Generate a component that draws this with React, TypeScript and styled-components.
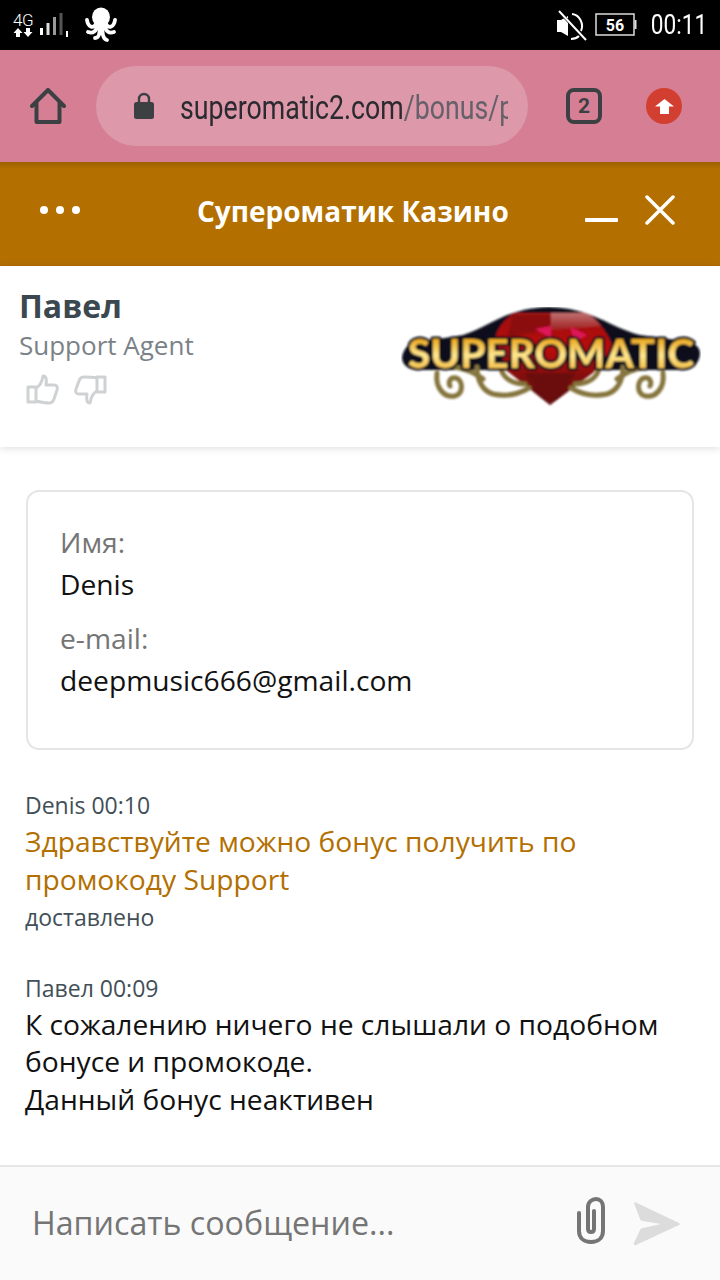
import React from 'react';
import styled, { createGlobalStyle } from 'styled-components';

const GlobalStyle = createGlobalStyle`
  html, body { margin: 0; padding: 0; background: #fff; }
  body { font-family: 'Open Sans', 'Noto Sans', sans-serif; }
  * { box-sizing: border-box; }
`;

const Page = styled.div`
  width: 720px;
  height: 1280px;
  display: flex;
  flex-direction: column;
  overflow: hidden;
  background: #fff;
`;

const StatusBar = styled.div`
  height: 50px;
  flex: none;
  background: #000;
  color: #fff;
  display: flex;
  align-items: center;
  justify-content: space-between;
  padding: 0 13px 0 13px;
`;

const StatusGroup = styled.div`
  display: flex;
  align-items: center;
`;

const Network = styled.div`
  width: 20px;
  margin-right: 7px;
  display: flex;
  flex-direction: column;
  align-items: center;
  font: 300 17px/15px Roboto, sans-serif;
  letter-spacing: -0.5px;
`;

const SignalIcon = styled.svg`
  margin-right: 15px;
`;

const MuteIcon = styled.svg`
  margin-right: 8px;
`;

const Clock = styled.span`
  font: 400 27px/52px Roboto, sans-serif;
  margin-left: 3px;
  transform: scaleX(0.84);
  transform-origin: right center;
`;

const BrowserBar = styled.div`
  height: 112px;
  flex: none;
  background: #d67f94;
  display: flex;
  align-items: center;
  padding-left: 30px;
`;

const AddressPill = styled.div`
  width: 432px;
  height: 80px;
  margin-left: 30px;
  border-radius: 40px;
  background: #dd98a9;
  display: flex;
  align-items: center;
  padding-left: 37px;
`;

const Url = styled.div`
  width: 328px;
  margin-left: 25px;
  overflow: hidden;
`;

const UrlText = styled.div`
  width: 405px;
  margin-top: 3px;
  white-space: nowrap;
  font: 400 33px/40px Roboto, sans-serif;
  color: #2b2a30;
  transform: scaleX(0.81);
  transform-origin: left center;
  span { color: #66606a; }
`;

const TabCount = styled.div`
  width: 36px;
  height: 36px;
  margin-left: 38px;
  border: 4px solid #3c4043;
  border-radius: 8px;
  display: flex;
  align-items: center;
  justify-content: center;
  font: 700 21px/1 Roboto, sans-serif;
  color: #3c4043;
`;

const UpdateDot = styled.div`
  width: 36px;
  height: 36px;
  margin-left: 44px;
  border-radius: 50%;
  background: #d23f31;
  display: flex;
  align-items: center;
  justify-content: center;
`;

const ChatHeader = styled.div`
  height: 104px;
  flex: none;
  background: linear-gradient(#9c6200 0, #b36f00 7px);
  color: #fff;
  display: flex;
  align-items: center;
  padding: 0 0 6px 40px;
`;

const Dots = styled.div`
  display: flex;
  gap: 8px;
  margin-top: -2px;
`;

const Dot = styled.i`
  width: 8px;
  height: 8px;
  border-radius: 50%;
  background: #fff;
`;

const ChatTitle = styled.div`
  width: 311px;
  margin-left: 117px;
  font-size: 28px;
  font-weight: 700;
  line-height: 40px;
  white-space: nowrap;
`;

const Minimize = styled.i`
  width: 33px;
  height: 4px;
  margin: 18px 0 0 77px;
  background: #fff;
  border-radius: 1px;
`;

const CloseIcon = styled.svg`
  margin: -2px 0 0 27px;
  flex: none;
`;

const AgentPanel = styled.div`
  height: 181px;
  flex: none;
  position: relative;
  background: #fff;
  box-shadow: 0 1px 8px rgba(0, 0, 0, 0.14);
  display: flex;
  justify-content: space-between;
  padding: 19px 19px 0 19px;
`;

const AgentName = styled.div`
  font-size: 32px;
  font-weight: 700;
  line-height: 42px;
  color: #3b4850;
`;

const AgentRole = styled.div`
  font-size: 26px;
  line-height: 37px;
  color: #7b8287;
`;

const Votes = styled.div`
  display: flex;
  gap: 13px;
  margin: 10px 0 0 7px;
`;

const Logo = styled.svg`
  margin-top: 22px;
  flex: none;
`;

const Content = styled.div`
  flex: 1;
  padding: 43px 26px 0 25px;
`;

const InfoCard = styled.div`
  width: 668px;
  height: 260px;
  margin-left: 1px;
  border: 2px solid #e3e5e6;
  border-radius: 13px;
  padding: 26px 32px 0;
`;

const InfoLabel = styled.div`
  font-size: 28.2px;
  line-height: 48px;
  color: #757575;
`;

const InfoValue = styled.div`
  font-size: 28.2px;
  line-height: 36px;
  height: 48px;
  color: #111;
`;

const Message = styled.div<{ $first?: boolean }>`
  margin-top: ${(p) => (p.$first ? '37px' : '35px')};
`;

const Meta = styled.div`
  font-size: 23px;
  line-height: 36px;
  color: #424f57;
`;

const Body = styled.div<{ $own?: boolean }>`
  font-size: 28.2px;
  line-height: 37.8px;
  color: ${(p) => (p.$own ? '#b36f00' : '#111')};
`;

const Composer = styled.div`
  height: 115px;
  flex: none;
  background: #fafafa;
  border-top: 2px solid #e6e6e6;
  display: flex;
  align-items: center;
  padding: 0 40px 0 32px;
`;

const Placeholder = styled.div`
  flex: 1;
  font-size: 32.2px;
  color: #757575;
  margin-top: -2px;
`;

const AttachIcon = styled.svg`
  margin: -6px 26px 0 0;
  flex: none;
`;

const Octopus = () => (
  <svg width="32" height="36" viewBox="0 0 32 36" fill="none" stroke="#fff" strokeWidth="3.800" strokeLinecap="round">
    <ellipse cx="16" cy="10" rx="9" ry="9.500" fill="#fff" stroke="none" />
    <path d="M11 17C8 22 3 20 2 13" />
    <path d="M21 17C24 22 29 20 30 13" />
    <path d="M12 18C12 24 8 27 3 25" />
    <path d="M20 18C20 24 24 27 29 25" />
    <path d="M14.500 19C15 27 14 31 10 31" />
    <path d="M17.500 19C17 27 18 32 22 33" />
  </svg>
);

const Signal = () => (
  <SignalIcon width="30" height="24" viewBox="0 0 30 24">
    <rect x="0" y="15" width="3" height="7" fill="#fff" />
    <rect x="6.500" y="10" width="3" height="12" fill="#ddd" />
    <rect x="13" y="4" width="3" height="18" fill="#999" />
    <rect x="19.500" y="0" width="3" height="22" fill="#555" />
    <rect x="26" y="18" width="2" height="6" fill="#fff" />
  </SignalIcon>
);

const Muted = () => (
  <MuteIcon width="30" height="31" viewBox="0 0 30 31" fill="none" stroke="#fff">
    <path d="M0 10h4l7-4v20l-7-4H0z" fill="#fff" stroke="none" />
    <path d="M15 4c8 1 12 10 9 17M14 29c3 0 6-1 8-3" strokeWidth="2" />
    <path d="M-1 -2L27 28" strokeWidth="3" stroke="#000" />
    <path d="M2 1l27 29" strokeWidth="2" />
  </MuteIcon>
);

const Battery = () => (
  <svg width="42" height="24" viewBox="0 0 42 24">
    <rect x="1" y="1" width="38" height="21" fill="#000" stroke="#ddd" strokeWidth="1.500" />
    <rect x="39.500" y="7" width="2" height="9" fill="#ddd" />
    <text x="20" y="18" textAnchor="middle" fontFamily="Roboto, sans-serif" fontWeight="700" fontSize="16" fill="#fff">
      56
    </text>
  </svg>
);

const ThumbUp = () => (
  <svg width="34" height="32" viewBox="0 0 34 32" fill="none" stroke="#cfd2d3" strokeWidth="3" strokeLinejoin="round">
    <path d="M2 13h8v15H2z" />
    <path d="M10 14c4-2 6-6 7-12 3 0 4 3 3 9h8c3 0 4 2 3 5l-3 9c-1 3-2 4-5 4-5 0-9-1-13-2" />
  </svg>
);

const ThumbDown = () => (
  <svg width="34" height="32" viewBox="0 0 34 32" fill="none" stroke="#cfd2d3" strokeWidth="3" strokeLinejoin="round">
    <path d="M32 18h-8V3h8z" />
    <path d="M24 17c-4 2-6 6-7 12-3 0-4-3-3-9H6c-3 0-4-2-3-5l3-8c1-3 2-4 5-4 5 0 9 0 13 1" />
  </svg>
);

const SuperomaticLogo = () => (
  <Logo width="300" height="100" viewBox="0 0 300 100">
    <defs>
      <linearGradient id="gold" x1="0" y1="0" x2="0" y2="1">
        <stop offset="0.2" stopColor="#eba922" />
        <stop offset="0.55" stopColor="#ffe68f" />
        <stop offset="0.95" stopColor="#f0b234" />
      </linearGradient>
      <linearGradient id="ruby" x1="0" y1="0" x2="0" y2="1">
        <stop offset="0" stopColor="#a01212" />
        <stop offset="0.4" stopColor="#b80f10" />
        <stop offset="1" stopColor="#4c0505" />
      </linearGradient>
      <linearGradient id="shine" x1="0" y1="0" x2="0" y2="1">
        <stop offset="0" stopColor="#c07070" />
        <stop offset="1" stopColor="#a02020" />
      </linearGradient>
      <filter id="soft" x="-5%" y="-5%" width="110%" height="110%">
        <feGaussianBlur stdDeviation="0.8" />
      </filter>
    </defs>
    <g filter="url(#soft)">
      <path d="M1 50c2-10 8-15 18-15l43-7C88 20 105 1 148 0c43 1 60 20 91 28l44 6c10 1 16 6 16 12 0 9-6 16-16 17H19C8 64 1 58 1 50z" fill="#0a0f1e" />
      <path d="M94 32c2-12 12-22 20-26h70c12 6 22 18 28 34l-20 26-43 32-43-34z" fill="url(#ruby)" />
      <path d="M150 6h34c8 3 12 8 16 13l-50 4z" fill="url(#shine)" />
      <path d="M112 8h38v14l-20 4-24 4z" fill="#8c0e0e" />
      <path d="M134 22l16-3v12z M169 20l17 8-12 6z" fill="#e0185a" />
      <path d="M149 98l-26-32h52z" fill="#6c0909" />
      <g fill="none" stroke="#85743c" strokeWidth="5" strokeLinecap="round">
        <path d="M36 66c-2 16 8 25 18 23 9-3 8-16 1-18-6-1-8 4-6 8" />
        <path d="M76 60c0 14 6 24 16 27 14 3 26 0 36-6" />
        <path d="M54 60c12 2 20 6 28 12" />
        <path d="M100 62c2 8 10 15 24 15" />
        <path d="M262 66c2 16-8 25-18 23-9-3-8-16-1-18 6-1 8 4 6 8" />
        <path d="M222 60c0 14-6 24-16 27-14 3-26 0-36-6" />
        <path d="M244 60c-12 2-20 6-28 12" />
        <path d="M198 62c-2 8-10 15-24 15" />
      </g>
      <text x="150" y="61" textAnchor="middle" fontFamily="Lato, 'Liberation Sans', sans-serif" fontWeight="900" fontSize="39" textLength="286" lengthAdjust="spacingAndGlyphs" fill="url(#gold)" stroke="#0a0f1e" strokeWidth="5" paintOrder="stroke" strokeLinejoin="round">
        SUPEROMATIC
      </text>
    </g>
  </Logo>
);

export default function App() {
  return (
    <Page>
      <GlobalStyle />
      <StatusBar>
        <StatusGroup>
          <Network>
            4G
            <svg width="20" height="10" viewBox="0 0 20 10" fill="#fff">
              <path d="M5 0l4.500 5H7v4H3V5H.5zM15 9l-4.500-5H13V0h4v4h2.500z" />
            </svg>
          </Network>
          <Signal />
          <Octopus />
        </StatusGroup>
        <StatusGroup>
          <Muted />
          <Battery />
          <Clock>00:11</Clock>
        </StatusGroup>
      </StatusBar>
      <BrowserBar>
        <svg width="36" height="36" viewBox="0 0 36 36" fill="none" stroke="#3c4043" strokeWidth="4" strokeLinejoin="round" strokeLinecap="round">
          <path d="M2 18L18 2l16 16M6.500 15v19h23V15" />
        </svg>
        <AddressPill>
          <svg width="22" height="28" viewBox="0 0 22 28">
            <path d="M6 11V7a5 5 0 0 1 10 0v4" fill="none" stroke="#3c4043" strokeWidth="2.400" />
            <rect x="1" y="10" width="20" height="17" rx="2.500" fill="#3c4043" />
          </svg>
          <Url>
            <UrlText>
              superomatic2.com<span>/bonus/p</span>
            </UrlText>
          </Url>
        </AddressPill>
        <TabCount>2</TabCount>
        <UpdateDot>
          <svg width="19" height="15" viewBox="0 0 19 15" fill="#fff">
            <path d="M9.500 0l9.500 7.500h-5V15H5V7.500H0z" />
          </svg>
        </UpdateDot>
      </BrowserBar>
      <ChatHeader>
        <Dots>
          <Dot />
          <Dot />
          <Dot />
        </Dots>
        <ChatTitle>Супероматик Казино</ChatTitle>
        <Minimize />
        <CloseIcon width="30" height="30" viewBox="0 0 30 30" stroke="#fff" strokeWidth="3.500" strokeLinecap="round">
          <path d="M2 2l26 26M28 2L2 28" />
        </CloseIcon>
      </ChatHeader>
      <AgentPanel>
        <div>
          <AgentName>Павел</AgentName>
          <AgentRole>Support Agent</AgentRole>
          <Votes>
            <ThumbUp />
            <ThumbDown />
          </Votes>
        </div>
        <SuperomaticLogo />
      </AgentPanel>
      <Content>
        <InfoCard>
          <InfoLabel>Имя:</InfoLabel>
          <InfoValue>Denis</InfoValue>
          <InfoLabel>e-mail:</InfoLabel>
          <InfoValue>deepmusic666@gmail.com</InfoValue>
        </InfoCard>
        <Message $first>
          <Meta>Denis 00:10</Meta>
          <Body $own>Здравствуйте можно бонус получить по промокоду Support</Body>
          <Meta>доставлено</Meta>
        </Message>
        <Message>
          <Meta>Павел 00:09</Meta>
          <Body>
            К сожалению ничего не слышали о подобном бонусе и промокоде.
            <br />
            Данный бонус неактивен
          </Body>
        </Message>
      </Content>
      <Composer>
        <Placeholder>Написать сообщение...</Placeholder>
        <AttachIcon width="30" height="47" viewBox="0 0 30 47" fill="none" stroke="#757575" strokeWidth="4" strokeLinecap="round">
          <path d="M3 16v18c0 7 5 11 12 11s12-4 12-11V10c0-5-3-8-7-8s-8 3-8 8v22c0 2 1 3 3 3s3-1 3-3V14" />
        </AttachIcon>
        <svg width="48" height="44" viewBox="0 0 48 44" fill="#dcdcdc">
          <path d="M2 1c1-1 2-1 3 0l42 20c1 .5 1 1.500 0 2L4 43c-1 .5-3-.5-2-2l6-13c.5-1 1-2 3-2l18-4-18-3c-2 0-3-1-3-2z" />
        </svg>
      </Composer>
    </Page>
  );
}
